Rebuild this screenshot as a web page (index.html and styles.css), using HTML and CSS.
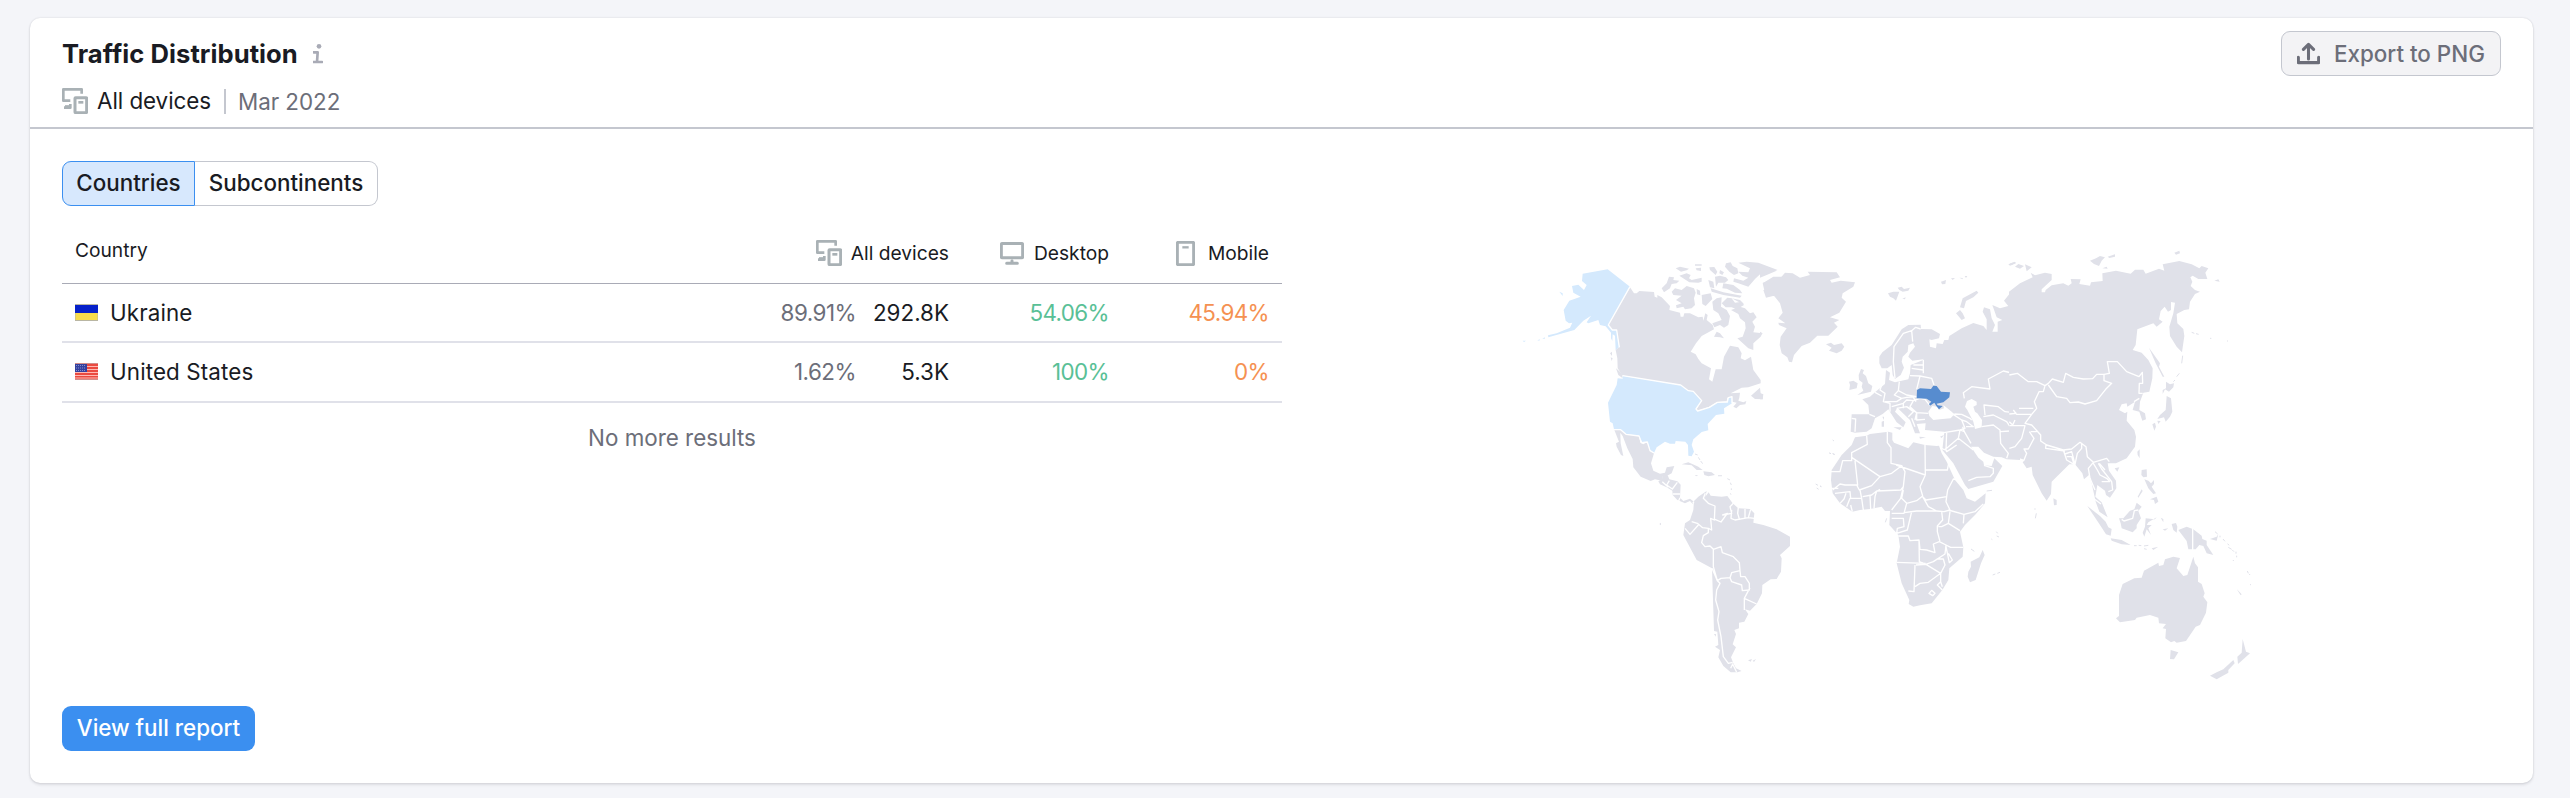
FILE: index.html
```html
<!DOCTYPE html>
<html lang="en">
<head>
<meta charset="utf-8">
<title>Traffic Distribution</title>
<link rel="stylesheet" href="styles.css">
</head>
<body>
<svg class="defs" width="0" height="0" aria-hidden="true">
  <symbol id="devices" viewBox="0 0 78 78">
    <path d="M59 17V4H4V38H25M6 59H25V48" fill="none" stroke="currentColor" stroke-width="8" stroke-linejoin="round"/>
    <path d="M9 56H22" stroke="currentColor" stroke-width="9"/>
    <rect x="39" y="29" width="35" height="45" rx="2" fill="none" stroke="currentColor" stroke-width="9"/>
    <path d="M49 43H64" stroke="currentColor" stroke-width="8"/>
  </symbol>
</svg>
<main class="card">
  <header class="head">
    <div class="titles">
      <div class="title-row"><h1 class="title">Traffic Distribution</h1>
        <svg class="info" viewBox="0 0 30 60"><circle cx="18" cy="7" r="7"/><path d="M2 25H14L12 54M2 54H27" fill="none" stroke="currentColor" stroke-width="8" stroke-linecap="round" stroke-linejoin="round"/></svg>
      </div>
      <div class="sub"><svg class="icon-dev"><use href="#devices"/></svg><span class="device">All devices</span><span class="date">Mar 2022</span></div>
    </div>
    <button class="export"><svg class="up" viewBox="0 0 68 68"><path d="M4 45V61H64V45M34 50V8M19 22L34 7L49 22" fill="none" stroke="currentColor" stroke-width="9" stroke-linecap="round" stroke-linejoin="round"/></svg><span>Export to PNG</span></button>
  </header>
  <div class="body">
    <section class="left">
      <div class="tabs"><button class="tab tab-on">Countries</button><button class="tab tab-off">Subcontinents</button></div>
      <table class="table">
        <thead><tr><th class="c-name"><span class="th-name">Country</span></th>
          <th class="c-all"><span class="th"><svg class="icon-dev"><use href="#devices"/></svg>All devices</span></th>
          <th class="c-dev"><span class="th"><svg class="icon-desk" viewBox="0 0 72 68"><rect x="4" y="4" width="64" height="43" rx="3" fill="none" stroke="currentColor" stroke-width="9"/><path d="M20 63H52M36 56V60" stroke="currentColor" stroke-width="9" stroke-linecap="round"/></svg>Desktop</span></th>
          <th class="c-dev"><span class="th"><svg class="icon-mob" viewBox="0 0 57 75"><rect x="4" y="4" width="49" height="67" rx="3" fill="none" stroke="currentColor" stroke-width="9"/><path d="M19 19H38" stroke="currentColor" stroke-width="7"/></svg>Mobile</span></th></tr></thead>
        <tbody>
          <tr><td><span class="country"><svg class="flag" viewBox="0 0 23 17"><rect width="23" height="17" fill="#b9b6a3"/><rect y="1" width="23" height="8" fill="#0620c9"/><rect x=".5" y="9" width="22" height="7" fill="#f8dc4c"/></svg>Ukraine</span></td>
            <td><span class="nums"><span class="share">89.91%</span><span class="val">292.8K</span></span></td><td class="desk">54.06%</td><td class="mob">45.94%</td></tr>
          <tr><td><span class="country"><svg class="flag" viewBox="0 0 23 17"><rect width="23" height="17" fill="#ea4a40"/><path d="M0 3.5H23M0 6.5H23M0 9.5H23M0 12.5H23M0 15H23" stroke="#ffb9b3"/><path d="M0 .4H23M0 16.6H23" stroke="#c6a9aa" stroke-width=".8"/><rect y="1" width="12" height="8" fill="#34419f"/><path d="M1 2.5H11M1 5H11M1 7.5H11" stroke="#8790cc" stroke-dasharray="1 1"/></svg>United States</span></td>
            <td><span class="nums"><span class="share">1.62%</span><span class="val">5.3K</span></span></td><td class="desk">100%</td><td class="mob">0%</td></tr>
        </tbody>
      </table>
      <p class="nomore">No more results</p>
      <button class="report">View full report</button>
    </section>
    <section class="right">
      <svg class="map" viewBox="1520 230 750 460" role="img" aria-label="World map">
        <!-- North America -->
        <g transform="translate(1520 230) scale(.333333)">
          <path class="land" d="M330 172L342 190L350 190L358 183L402 186L404 200L412 203V195L425 202L450 228L448 240L480 248L482 260L490 260L493 250L510 250L535 262L548 260L550 272L556 250L563 255L560 270L578 285L582 298L545 318L528 340L512 365L527 373L535 387L545 400L573 415L567 448L577 455L587 418L605 418L612 380L630 347L655 352L665 370L662 385L675 391L693 380L700 420L722 450V460L685 472L665 473L632 490L660 488L658 503L655 512L670 517L679 513L676 523L660 525L649 535L640 530L650 518L637 515L636 500L622 503L620 514L592 516L568 530L533 542L530 537L545 512L520 484L505 482L482 465L308 437L293 415L292 385L287 360L298 350L290 300L277 300L265 285Z"/>
          <path class="land" d="M425 175L440 160L447 140L462 142L460 150L478 152L470 160L455 162L450 175L432 187ZM455 185L465 175L485 180L500 168L522 175L527 188L522 205L525 225L515 235L495 238L490 230L470 235L468 226L485 220L468 210L485 197L460 195ZM467 115L480 110L507 116L500 121L483 125ZM478 137L500 130L512 135L507 145L515 150L545 143V155L535 158L508 157ZM525 103H545V107H525ZM527 115L543 113L543 123L530 121ZM568 112L583 111L592 125L587 135L570 120ZM600 120L612 127L607 135L598 130ZM565 150L580 155L583 175L570 172ZM530 177L540 182L541 196L531 193ZM545 195L572 190L577 207L557 228L547 222ZM572 175L610 187L665 197L660 203L610 195L575 185ZM618 100L632 97L638 108L652 115L655 130L642 135L628 125L615 110ZM585 140L600 137L618 142L625 150L615 158L595 158L588 170ZM610 160L640 165L660 180L667 190L645 188L620 176L607 175ZM655 98L680 95L715 98L773 120L750 127L725 128L705 147L685 170L655 160L640 155L642 145L670 152L685 143L667 137L655 125L685 127L690 115ZM577 215L590 205L605 202L603 230L620 240L630 258L625 285L612 293L600 285L583 292L577 280L605 270L595 250L580 240ZM605 220L622 203L635 205L645 218L665 215L672 225L650 238L635 232L617 232ZM635 205L660 210L672 222L655 215ZM633 240L660 230L675 235L690 250L700 247L710 262L697 275L705 290L700 307L727 310L722 320L700 340V360L685 355L652 325L668 320L677 295L675 277L660 265L655 252ZM582 320L590 305L600 310L612 325L600 322ZM693 497L720 473L722 490L730 493L728 508L705 507ZM288 415L305 430L308 445L295 435ZM270 370L276 365V378ZM272 382L278 385L275 393ZM728 160L760 140L790 140V200L760 198L735 190Z"/>
          <path class="us" d="M188 131L263 118L330 170L265 285L277 300L290 300L298 350L287 360L285 317L278 313L277 333L273 325V308L262 295L257 289L240 285L235 270L205 280L200 277L213 257L190 272L163 300L85 322L84 316L110 310L150 293L157 278L147 280L137 272L131 240L148 212L182 200L160 188L156 168L175 164L192 180L200 165L186 153ZM118 185L128 190V198ZM8 332L18 332L12 336ZM52 331L60 328L58 332ZM67 326L74 322L75 326Z"/>
          <path class="us" d="M293 445L308 446V437L482 465L505 482L520 484L545 512L528 537L533 543L568 532L592 517L622 516L625 503L635 501L636 520L612 535L613 551L588 555L563 582L565 601L545 606L520 628L515 645L522 665L515 679L505 677L504 645L496 635L467 633L465 641L450 641L435 635L410 652L402 669L390 660L382 635L372 640L365 635L357 617L318 612L302 599L282 598L278 580L270 575L264 518L290 465Z"/>
          <path class="land" d="M283 600L302 600L318 613L357 618L361 638L370 643L382 636L390 662L402 670L393 700L400 722L420 731L435 728L440 712L463 708L455 730L440 738L428 738L425 752L405 748L392 753L362 740L340 712L338 687L322 655L308 618L301 608L302 640L310 678L303 675L290 650L288 640L297 635Z"/>
          <path class="line" d="M330 170L265 285L277 300H290L298 352M308 437L482 465L505 482L520 484L545 512L528 537L533 543L568 532L592 517L622 516L625 503L636 500V520M282 599L302 599L318 613L357 618L365 638L382 636L390 662L402 669"/>
        </g>
        <!-- Central and South America -->
        <g transform="translate(1640 450) scale(.333333)">
          <path class="land" d="M55 94L66 88L67 78L83 76L88 88L112 94L122 104L120 143L130 153L150 146L162 155L158 162L150 153L135 160L112 150L98 135L97 122L80 112L60 103Z"/>
          <path class="land" d="M162 153L175 140L200 123L196 140L206 127L212 137L245 140L262 138L278 160L295 175L330 177L343 190L340 218L370 225L410 238L450 260V288L420 315L425 325L423 365L410 387L392 388L367 405L366 430L350 462L330 482L315 478L325 492L313 515L297 518V535L283 540L288 552L278 583L288 592L273 622L280 640L288 655L305 663L292 667H272L250 648L235 622L240 600L225 590L235 585L232 545L222 543L216 355L170 330L130 255L135 220L150 210L160 180ZM125 43L145 37L175 50L188 60L170 60L155 46ZM190 64L215 67L225 75L205 79L193 75ZM165 75L175 76L168 79ZM234 76H246V79H234ZM222 552L228 552L227 560ZM58 222L63 218V226ZM324 631L336 627L332 635ZM338 632L348 627L342 636Z"/>
          <path class="specks" d="M165 12L173 15M175 22L180 30M182 33L188 41M262 86L270 90M271 98L274 105M274 115V120M271 130L273 134M527 102L534 106M530 114L536 118M540 108L544 110M568 9L573 11M578 11L584 14"/>
          <path class="line" d="M67 95L85 112M88 92L80 105L97 117L112 97M98 132H120M120 143L115 155M162 155L158 160M196 130L190 145L205 160L225 168L223 210L212 205L215 240L205 235L188 233L172 220L155 215M225 208L243 216L262 190L248 195L275 190L270 170L280 160M275 180L273 205L285 210L325 203L343 205M295 172L293 190L298 207M315 177V205M332 178L325 203M135 235L150 253L175 225M205 235V248L190 257L185 278L195 290L210 288L220 298L243 290L247 308L280 320L298 338L300 362L275 368L270 383L243 385L232 392L220 350V298M300 362L302 380H315L328 400V420L307 422L305 405L275 395L270 383M330 413L313 445L350 462M313 445V480M216 355L232 392L240 400L230 420L227 450L237 485L233 510L243 560L250 620L265 640L278 637M272 655L278 642L290 667"/>
        </g>
        <!-- Greenland, Europe, Middle East -->
        <g transform="translate(1760 230) scale(.333333)">
          <path class="land" d="M8 158L30 155L40 142L62 143L75 128L98 130L120 143L150 135L143 125L230 127L240 142L210 150L215 158L242 152L285 157L280 170L248 190L245 203L258 215L238 248L210 262L238 270L222 278L233 290L205 317L172 317L150 338L125 348L102 375L96 397L87 395L82 382L65 370L59 345L62 320L80 295L57 285L55 278L76 280L55 265L68 248L60 220L42 197L18 203L10 180L30 177ZM0 103L50 122L20 135L0 143ZM0 305L8 310L0 317ZM0 490L8 495V508H0ZM198 343L213 338L222 345L245 340L253 350L245 362L230 370L207 362L215 353ZM384 190L400 185L418 185L408 212L400 205L390 200ZM413 173L425 170L432 177L450 173L445 182L428 185L418 180ZM427 206L437 202L435 208ZM543 155L558 150L556 162L546 163ZM573 145L585 144L578 150ZM598 143L608 144V148ZM614 138L622 138L618 144ZM600 232L608 205L650 182L655 188L640 202L618 213L612 235ZM588 250L600 240L608 250L615 265L605 270ZM745 103L765 95L768 100L750 107Z"/>
          <path class="land" d="M296 435L303 417L312 420L308 430L318 438L325 460L337 468L333 485L292 495L310 482L305 470L308 458L297 450ZM267 455L280 452L293 460L290 475L268 480L270 465Z"/>
          <path class="land" d="M358 380L367 367L395 345L425 298L445 285L482 284L483 297L490 325L502 370L490 388L457 392L445 380L450 368L465 350L460 340L445 345L443 365L428 380L425 395L432 413L422 435L405 447L398 435L395 405L382 415L365 415L358 400Z"/>
          <path class="land" d="M482 297L515 298L540 312L537 325L515 330L508 328L510 350L528 355L530 340L548 342L553 330L565 330L568 318L605 295L640 279L670 288L680 300V268L668 245L672 232L690 238L695 265L705 285L697 305L713 305V275L727 270L710 262L697 225L720 235L745 228L732 212L750 190L780 163V690L740 688L725 682L700 680L672 668L655 650L633 650L655 683L670 695L672 706L695 708L703 685L727 708L700 755L625 777L615 765L580 700L547 660L553 605L495 600L497 580L470 582L480 610L465 610L450 570L412 533L405 545L437 577L430 592L410 577L385 538L368 552L345 565L335 595L320 605L285 608L272 605L275 553L328 553L325 525L307 508L330 500L345 487L375 462L378 420L390 428L387 450L405 457L445 448L450 430L452 405L490 390Z"/>
          <path class="sea" d="M508 558L505 545L517 528L532 530L537 540L552 535L550 525L575 545L583 553L572 565L540 568L520 570ZM621 513L635 507L650 515V525L640 530L645 545L652 550L666 570L665 592L645 597L640 575L622 540L615 530Z"/>
          <path class="land" d="M400 592L425 592L420 600ZM365 575L372 572V590L365 590ZM367 560L372 560V570ZM478 620L498 622L480 626ZM540 620L552 615L545 624Z"/>
          <path class="line" d="M405 445L400 395L402 350L430 310L455 302L458 335M455 302L467 292L482 297M460 405H490M455 415L490 420M450 437L480 438L515 445L522 465M490 390V430M480 438L470 478M418 455L415 482L440 495L470 500M345 487L365 498M365 465L360 480L375 490L370 515L390 520V545M415 482L403 495L425 505L410 515L375 515M425 505L440 502L470 500M395 530L430 520L440 510L460 512L480 505L495 508L510 527M430 520V535M410 535L440 530L460 545L445 560M460 512L450 530L470 548L505 550M440 530L470 548L465 570M470 548V570L495 568M455 565L465 590M275 565L287 567L285 605M328 553L345 560M460 502L468 515M552 608L600 600L615 595L605 570L575 550M583 552L605 553L630 565L635 570M605 570L620 575L640 590L618 590M600 600L595 625L560 655M560 605L558 660M595 625L640 660M600 600L613 605L608 590M613 605L633 640M665 590L700 585L720 600L722 640L745 670L740 685M722 605L750 603L780 585M670 560L700 555L740 575L750 590M675 555L672 525L715 530L735 545L780 550M613 505L610 488L635 470L690 477L685 447L730 423L780 435M555 660L545 655M555 655L560 665L575 655L590 645M672 706L700 715L700 730L690 740L650 742L625 752"/>
          <path class="ua" d="M470 505L471 480L480 475L513 477L520 467L530 468L543 485L570 487L568 502L550 517L530 521L533 526L548 528L537 538L529 528L523 518L510 527L507 522L514 515L500 506Z"/>
        </g>
        <!-- Asia -->
        <g transform="translate(2010 230) scale(.333333)">
          <path class="land" d="M-3 185L30 160L68 142L62 128L75 136L105 128L125 132V150L95 178V187L105 187L107 180L125 166L160 160L175 167L185 160L182 147L212 148L208 162L240 167L243 157L278 153L277 130L318 122L362 131L375 119H400L407 131L447 116L463 122L458 103L508 93L545 103L568 115L575 108L595 115L586 128L592 147L565 147L548 137L541 142L547 155L542 168L555 180L570 185L555 192L540 215L537 238L523 240L500 252L502 280L520 297L523 318L516 367L500 350L480 318L478 290L490 250L495 218L483 216L483 240L474 245L464 230L452 243L447 268L458 275L440 290L430 280L382 298L377 345L368 360L395 368L415 390L428 415L427 445L418 485L400 488L390 515L388 540L405 550L408 568L397 572L388 545L368 540L375 515L352 530L350 520L335 523L327 540L345 550L352 545L350 572L373 600L378 620L375 650L350 685L318 700L293 700L297 722L318 752L319 775L300 803L288 795L285 782L262 765L256 800L275 817L293 862L268 845L257 815L245 760L237 735L222 748L217 730L195 703L178 703L125 755L123 792L110 812L95 790L68 735L65 710L50 715L38 697L45 690L20 682L-3 685Z"/>
          <path class="land" d="M240 92L258 85L270 78L285 82L275 92L267 108L252 102ZM293 80L315 73V80L298 84ZM277 115L290 110L293 116ZM493 68L508 62L510 70L498 74ZM15 110L25 102L42 108L30 116ZM45 103L65 112L50 124ZM0 100L17 96L5 106ZM613 152L625 148L629 155ZM417 353L450 400L447 410L463 440L458 440L437 400ZM468 455L480 463L492 460L490 472L477 485L465 478L458 492V480L468 475ZM470 498L483 505L487 545L480 560L467 575L462 562L442 567L450 555L467 540ZM427 583L435 578L438 590L433 602ZM442 572L452 573L445 582ZM382 665L389 658V685L383 675ZM314 715L328 712L322 725ZM395 720L410 718L411 740L400 742L394 735Z"/>
          <path class="specks" d="M518 377L515 400M508 430L500 440M495 450L490 455M545 307L553 310M558 311L566 313M600 325H604M651 333H654"/>
          <path class="line" d="M-2 435L22 430L55 455L80 455L105 467L115 460L127 447L160 457L167 430L190 442L220 447L248 446L260 433H282L298 430L292 395H322L350 425L387 440L397 427L398 460H388L387 490L398 490M115 465L140 500L170 505L180 518L205 516L225 522L260 512L287 478L305 460L282 452V433M105 467L100 485H87L73 515L80 535L65 553H20L10 540M-2 552L20 550M27 535H70M65 553L45 580L65 585L92 615V633L110 645L160 660L185 657L210 637L228 650L232 680L250 697L290 685L298 695M108 642L107 655L165 663M-2 587H45L35 625L15 650L-2 655M62 605H80M58 605L72 625L55 657H42L50 670L42 690M-2 575L8 585L15 570M160 660L170 690L192 703L185 680H170M165 672L185 665L195 703L202 670L215 655V640M250 697L235 715L240 745L255 780M250 700L262 720L270 735L290 745L300 755M265 700L275 717L305 755L308 780L295 785M268 700L285 720M275 755L300 755M372 515L388 505"/>
        </g>
        <!-- Africa -->
        <g transform="translate(1820 410) scale(.333333)">
          <path class="land" d="M140 77L150 72L205 65L217 68V90L222 98L265 115L280 97L315 105L350 108L357 107L365 130L380 155L405 210L430 240L440 265L465 275L497 250L495 280L465 315L435 345L420 365L430 412L428 440L388 475L385 510L367 540L335 580L300 586L280 590L266 582L268 570L245 520L230 460L240 410L235 375L208 345L210 303L195 303L185 290L150 297L120 300L97 305L60 280L38 250L33 210L35 180L65 135L95 105L105 82Z"/>
          <path class="land" d="M488 420L494 435L483 460L467 510L450 517L443 500L445 485L453 470L452 455L478 442ZM700 265L710 270V285L702 286Z"/>
          <path class="specks" d="M38 90L42 93M28 129L33 131M38 131L44 133M0 228L4 230M200 325L196 337M645 295V299M649 310L646 325M529 365L533 370M514 387L517 389M530 378L537 381M453 417L463 424M518 495L526 492M532 490L540 487M500 243L516 241"/>
          <path class="line" d="M140 77L142 103L95 128V142L180 200L215 190L245 167L213 160V113L202 98V65M315 105L316 195L228 165M316 180H382L387 155M33 185H60L68 152H95V142M105 152L113 225H75L60 222L38 240M110 225L118 240L155 227L180 200M245 167L255 185L250 230L242 240L170 243L165 260M33 235H55M45 250L90 245L92 265H125L120 240M60 280L72 267L78 250M80 290L90 265M97 305L92 285M125 265L130 300M150 257L152 297M165 260L162 295M128 260L155 255L170 243M180 238L172 243M250 230L242 265L215 300M250 240L245 265L260 280L252 310H215M260 280L290 272L308 258L300 230L316 195M308 260L318 270L380 260L383 240L400 207L420 210L440 240M308 260L325 290L350 303L372 305L390 300L378 275L380 260M252 308L290 303L350 303M385 300L432 313L465 305L490 282M432 313L430 340M390 305L385 340L420 362M365 305L368 330L352 348V365L360 395M355 350H365L385 340M215 325H250L252 350L232 355L230 370L262 360L275 305M235 378H265L270 392L297 390L300 418L320 420L345 428L340 402L358 395L378 405L392 412L430 412M297 390L298 455L317 463L340 455L375 432L378 405M230 457L317 460M285 465L282 545L265 543M285 530L300 520L325 517L362 490L318 463L288 465M362 490L375 465L370 447L350 447M362 490V515M378 410L388 458L397 450L385 430M367 540L352 525L362 515L367 530M327 550L335 541L345 550L338 557Z"/>
        </g>
        <!-- Southeast Asia and Oceania -->
        <g transform="translate(2040 430) scale(.333333)">
          <path class="land" d="M228 565L237 558V495L248 462L283 445L305 443L312 422L355 398L357 408L370 405L375 388L400 380L420 384L410 415L430 438L442 435L460 380L465 400L474 412V455L485 462L494 490L490 500L502 517L498 548L480 585L467 590L438 633L410 638L403 633L393 637L376 625L378 597L368 595L378 582L357 580L355 563L330 555L290 563L285 570L240 577ZM392 660L415 667L402 688L390 687ZM608 627L618 665L630 670L594 702L592 680L605 668ZM580 690L584 700L565 720V728L530 748L510 737L530 727L550 718ZM590 477L605 493L602 496Z"/>
          <path class="land" d="M142 228L180 258L197 275L205 292L215 297L212 317L198 313L180 285ZM212 325L245 330L272 345L245 343L215 332ZM237 265L250 265L270 242L283 238L290 218L305 230L295 243L303 265L290 285V295L278 307L245 295L242 280ZM317 265L345 268L350 262L325 277L320 285L335 285L325 295L333 315L320 298L313 320L308 308L315 290ZM395 282L408 279L412 290L410 308L400 300ZM415 300L440 290L460 298L485 317L487 327L500 332V345L520 375L500 370L490 348L478 345L467 358H445L440 333ZM335 355L355 350L340 360ZM280 347H290ZM362 263L370 267V277ZM368 298L385 295L375 302ZM510 327L530 320L535 312L530 332ZM330 208L350 200L355 215L345 222L342 210ZM293 200L305 178L308 183L295 203ZM313 148L325 152L333 160L342 150V162L335 170L348 190L340 192L325 175Z"/>
          <path class="specks" d="M282 347H290M296 346L304 347M312 348L325 346M312 356L320 358M525 305L533 312M540 317V322M549 327L555 334M563 341L567 346M565 352L575 358M577 360L582 365M588 365V371M590 377V382M580 390V393M622 423L625 430M629 432V435M630 463L633 465"/>
          <path class="line" d="M458 295V360M245 268L252 273L278 265L283 242L295 240M160 205L183 222"/>
        </g>
      </svg>
    </section>
  </div>
</main>
</body>
</html>
```
FILE: styles.css
```css
* { box-sizing: border-box; }
body { margin: 0; padding: 18px 37px 15px 30px; height: 798px; background: #f4f5f9; color: #191b23; font-family: Inter, sans-serif; font-size: 22.4px; line-height: 32px; }
button { margin: 0; font: inherit; font-weight: 500; }
svg { display: block; flex: none; }
.defs { position: absolute; }
.card { display: flex; flex-direction: column; height: 765px; background: #fff; border-radius: 10px; box-shadow: 0 0 2px rgba(25,27,35,.16), 0 2px 3px rgba(25,27,35,.1); }
.head { display: flex; justify-content: space-between; align-items: flex-start; height: 111px; padding: 13px 32px 0; border-bottom: 2px solid #c4c7cf; }
.title-row { display: flex; align-items: center; gap: 15px; height: 45px; }
.title { margin: 0; font-size: 25.6px; font-weight: 700; line-height: 32px; letter-spacing: .05px; }
.info { width: 10px; height: 20px; color: #a9abb6; fill: currentColor; }
.sub { display: flex; align-items: center; height: 50px; }
.icon-dev { width: 26px; height: 26px; color: #a9b1b5; }
.device { margin-left: 9px; letter-spacing: -.05px; }
.date { margin-left: 13px; padding-left: 12px; border-left: 2px solid #c4c7cf; line-height: 25px; color: #6c6e79; letter-spacing: -.05px; }
.export { display: flex; align-items: center; gap: 14px; width: 220px; height: 45px; padding: 0 0 0 15px; border: 1px solid #c4c7cf; border-radius: 9px; background: #f3f3f5; color: #6c6e79; white-space: nowrap; }
.up { width: 23px; height: 23px; }
.body { display: flex; flex: 1; padding: 32px; }
.left { display: flex; flex-direction: column; align-items: flex-start; width: 1220px; }
.tabs { display: flex; height: 45px; }
.tab { height: 45px; padding: 0 0 1px; border: 1px solid #c4c7cf; background: #fff; color: #191b23; }
.tab-on { width: 133px; border-color: #3b8ff0; border-radius: 9px 0 0 9px; background: #d7e8fd; }
.tab-off { width: 183px; border-left: 0; border-radius: 0 9px 9px 0; }
.table { width: 1220px; table-layout: fixed; border-collapse: separate; border-spacing: 0; }
.table th { height: 78px; padding: 17px 13px 0; border-bottom: 1px solid #a9abb6; font-size: 19.2px; font-weight: 400; text-align: left; }
.th-name { display: block; padding-bottom: 6px; }
.th { display: flex; align-items: center; justify-content: flex-end; gap: 9px; }
.c-all { width: 360px; }
.c-dev { width: 160px; }
.icon-desk { width: 24px; height: 23px; margin-right: 1px; color: #a9b1b5; }
.icon-mob { width: 19px; height: 25px; margin-right: 4px; color: #a9b1b5; }
.table td { height: 59px; padding: 0 13px; border-bottom: 2px solid #e0e1e9; text-align: right; }
.table tbody tr:last-child td { height: 60px; padding-bottom: 1px; }
.country { display: flex; align-items: center; gap: 12px; letter-spacing: .12px; }
.flag { width: 23px; height: 17px; }
.nums { display: flex; justify-content: flex-end; }
.share { color: #6c6e79; letter-spacing: -.5px; }
.val { width: 93px; }
.desk { color: #59c096; letter-spacing: -.6px; }
.mob { color: #f59152; letter-spacing: -.6px; }
.nomore { width: 1220px; margin: 19px 0 0; text-align: center; color: #6c6e79; }
.report { width: 193px; height: 45px; margin-top: auto; padding: 0 0 1px; border: 0; border-radius: 9px; background: #3b8ff0; color: #fff; }
.right { padding: 69px 0 0 238px; }
.map { width: 750px; height: 460px; }
.land { fill: #e0e1e9; }
.us { fill: #d4e9fd; }
.ua { fill: #578ccf; }
.sea { fill: #fff; }
.line { fill: none; stroke: #fff; stroke-width: 4; stroke-linejoin: round; }
.specks { fill: none; stroke: #e0e1e9; stroke-width: 3; }
```
